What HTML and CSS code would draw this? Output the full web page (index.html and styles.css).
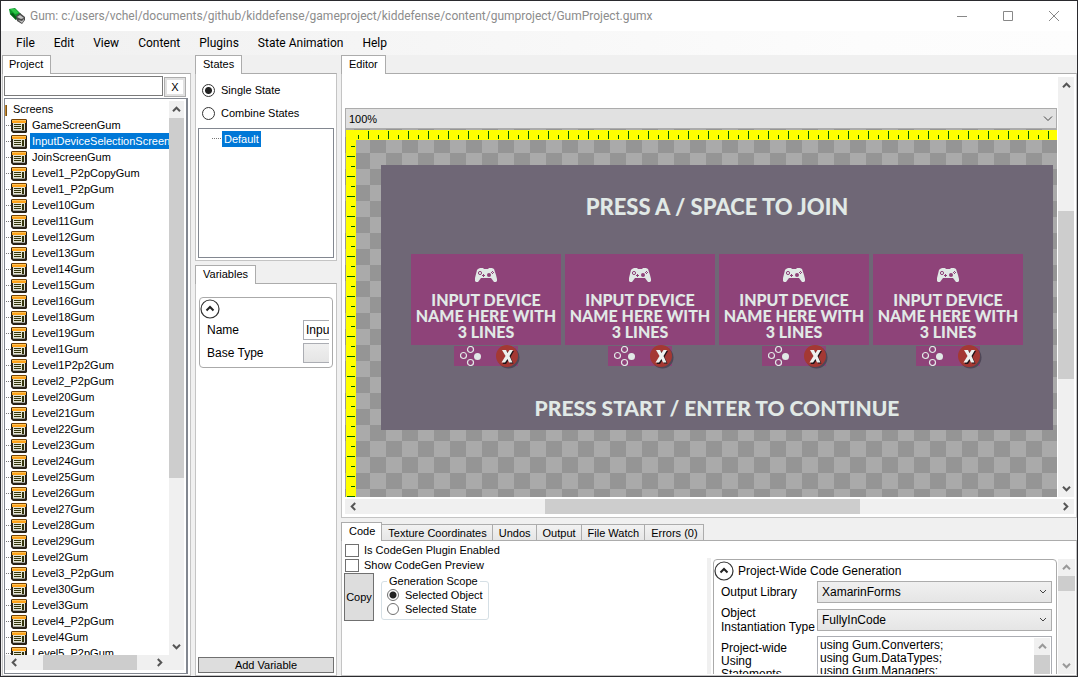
FILE: index.html
```html
<!DOCTYPE html>
<html lang="en">
<head>
<meta charset="utf-8">
<title>Gum</title>
<link rel="stylesheet" href="styles.css">
</head>
<body>
<svg class="sprites" aria-hidden="true">
  <symbol id="screen" viewBox="0 0 16 14">
    <path d="M1 0h14l1 1v12l-1 1H2l-2-2V1z" fill="#2a2318"/>
    <path d="M1 1h14v3H1z" fill="#ffa31a"/><path d="M1 1h14v1H1z" fill="#ffc45a"/><path d="M1 0h14v1H1z" fill="#7a4300"/>
    <path d="M2 4h12v8H2z" fill="#e4e4d4"/>
    <path d="M3 5h7v1H3zM3 7h7v1H3zM3 9h7v1H3zM11 5h2v6h-2z" fill="#33340a"/>
    <path d="M2 11h12v1H2z" fill="#a8a8a0"/>
  </symbol>
  <symbol id="up" viewBox="0 0 9 7"><path d="M1 5.2 4.5 1.7 8 5.2" fill="none" stroke="currentColor" stroke-width="2"/></symbol>
  <symbol id="down" viewBox="0 0 9 7"><path d="M1 1.8 4.5 5.3 8 1.8" fill="none" stroke="currentColor" stroke-width="2"/></symbol>
  <symbol id="left" viewBox="0 0 7 9"><path d="M5.2 1 1.7 4.5 5.2 8" fill="none" stroke="currentColor" stroke-width="2"/></symbol>
  <symbol id="right" viewBox="0 0 7 9"><path d="M1.8 1 5.3 4.5 1.8 8" fill="none" stroke="currentColor" stroke-width="2"/></symbol>
  <symbol id="expander" viewBox="0 0 20 20"><circle cx="10" cy="10" r="9" fill="#fff" stroke="#333" stroke-width="1.2"/><path d="M6.5 11.5 10 8l3.500 3.500" fill="none" stroke="#222" stroke-width="2"/></symbol>
  <symbol id="pad" viewBox="0 0 22 14">
    <path d="M5 0h3l1 1h4l1-1h3l2 1 1 3 1 3 1 4v2l-1 1h-2l-3-4H6l-3 4H1l-1-1v-3l1-4 1-4 1-1z" fill="#e1e9e6"/>
    <circle cx="5" cy="5" r="1.600" fill="none" stroke="#8e4379"/>
    <circle cx="14" cy="7" r="2" fill="#8e4379"/>
    <path d="M7 7.500h3M8.500 6v3M17.500 3v1M17.500 5v1M16 4.500h1M18 4.500h1" stroke="#8e4379"/>
  </symbol>
  <symbol id="buttons" viewBox="0 0 22 20">
    <g fill="none" stroke="#e1e9e6" stroke-width="1.2"><circle cx="10.500" cy="3.500" r="3"/><circle cx="3.500" cy="9.500" r="3"/><circle cx="10.500" cy="16.500" r="3"/></g>
    <circle cx="17.500" cy="10.500" r="3.500" fill="#e1e9e6"/>
  </symbol>
  <symbol id="cross" viewBox="0 0 24 24">
    <circle cx="12.500" cy="12.500" r="11" fill="#4f4757"/><circle cx="11" cy="11" r="11" fill="#a43833"/>
    <path d="M7 6h4l1.500 3L14.500 6H18l-3.500 6 3 6.500H14l-1.500-3.500-2.500 4H6.500l4-7z" fill="#201418"/>
    <path d="M6 5h4l1.500 3L13.500 5H17l-3.500 6 3 6.500H13L11.500 14 9 17.500H5.500L9.500 11z" fill="#eef2ef"/>
  </symbol>
</svg>

<div class="window">
  <header class="titlebar">
    <svg class="logo" viewBox="0 0 16 16"><path d="M0 1 6 0l6 6-5 6L1 6z" fill="#0b9a2a"/><path d="M1 1l5 0 4 4-4 1z" fill="#2fc548"/><path d="M1 6l3-1 4 5-1 2z" fill="#075f18"/><path d="M7 8l4-3 5 4v3l-3 4-5-3z" fill="#4b4b4b"/><path d="M8 9l3-2 4 3-3 1zM9 12l4 1 2-2v1l-2 3z" fill="#c4c4c4"/></svg>
    <h1>Gum: c:/users/vchel/documents/github/kiddefense/gameproject/kiddefense/content/gumproject/GumProject.gumx</h1>
    <div class="controls">
      <button aria-label="Minimize"><svg viewBox="0 0 10 10"><path d="M0 5.500h10"/></svg></button>
      <button aria-label="Maximize"><svg viewBox="0 0 10 10"><path d="M.5.5h9v9h-9z"/></svg></button>
      <button aria-label="Close"><svg viewBox="0 0 10 10"><path d="M0 0l10 10M10 0 0 10"/></svg></button>
    </div>
  </header>
  <nav class="menu">
    <button>File</button><button>Edit</button><button>View</button><button>Content</button><button>Plugins</button><button>State Animation</button><button>Help</button>
  </nav>

  <main class="workspace">
    <section class="dock project">
      <div class="tabs"><button class="tab active">Project</button></div>
      <div class="panel">
        <div class="search"><input type="text" aria-label="Search"><button>X</button></div>
        <div class="tree">
          <div class="tree-body">
            <ul>
              <li class="root">Screens</li>
              <li><svg><use href="#screen"/></svg><span>GameScreenGum</span></li>
              <li><svg><use href="#screen"/></svg><span class="selected">InputDeviceSelectionScreen</span></li>
              <li><svg><use href="#screen"/></svg><span>JoinScreenGum</span></li>
              <li><svg><use href="#screen"/></svg><span>Level1_P2pCopyGum</span></li>
              <li><svg><use href="#screen"/></svg><span>Level1_P2pGum</span></li>
              <li><svg><use href="#screen"/></svg><span>Level10Gum</span></li>
              <li><svg><use href="#screen"/></svg><span>Level11Gum</span></li>
              <li><svg><use href="#screen"/></svg><span>Level12Gum</span></li>
              <li><svg><use href="#screen"/></svg><span>Level13Gum</span></li>
              <li><svg><use href="#screen"/></svg><span>Level14Gum</span></li>
              <li><svg><use href="#screen"/></svg><span>Level15Gum</span></li>
              <li><svg><use href="#screen"/></svg><span>Level16Gum</span></li>
              <li><svg><use href="#screen"/></svg><span>Level18Gum</span></li>
              <li><svg><use href="#screen"/></svg><span>Level19Gum</span></li>
              <li><svg><use href="#screen"/></svg><span>Level1Gum</span></li>
              <li><svg><use href="#screen"/></svg><span>Level1P2p2Gum</span></li>
              <li><svg><use href="#screen"/></svg><span>Level2_P2pGum</span></li>
              <li><svg><use href="#screen"/></svg><span>Level20Gum</span></li>
              <li><svg><use href="#screen"/></svg><span>Level21Gum</span></li>
              <li><svg><use href="#screen"/></svg><span>Level22Gum</span></li>
              <li><svg><use href="#screen"/></svg><span>Level23Gum</span></li>
              <li><svg><use href="#screen"/></svg><span>Level24Gum</span></li>
              <li><svg><use href="#screen"/></svg><span>Level25Gum</span></li>
              <li><svg><use href="#screen"/></svg><span>Level26Gum</span></li>
              <li><svg><use href="#screen"/></svg><span>Level27Gum</span></li>
              <li><svg><use href="#screen"/></svg><span>Level28Gum</span></li>
              <li><svg><use href="#screen"/></svg><span>Level29Gum</span></li>
              <li><svg><use href="#screen"/></svg><span>Level2Gum</span></li>
              <li><svg><use href="#screen"/></svg><span>Level3_P2pGum</span></li>
              <li><svg><use href="#screen"/></svg><span>Level30Gum</span></li>
              <li><svg><use href="#screen"/></svg><span>Level3Gum</span></li>
              <li><svg><use href="#screen"/></svg><span>Level4_P2pGum</span></li>
              <li><svg><use href="#screen"/></svg><span>Level4Gum</span></li>
              <li><svg><use href="#screen"/></svg><span>Level5_P2pGum</span></li>
            </ul>
            <div class="vbar"><svg class="v"><use href="#up"/></svg><div class="track"><i class="thumb grow-360"></i><i class="grow-160"></i></div><svg class="v"><use href="#down"/></svg></div>
          </div>
          <div class="hbar"><svg class="h"><use href="#left"/></svg><div class="track"><i class="grow-20"></i><i class="thumb grow-93"></i><i class="grow-14"></i></div><svg class="h"><use href="#right"/></svg></div>
        </div>
      </div>
    </section>

    <div class="middle">
      <section class="dock states">
        <div class="tabs"><button class="tab active">States</button></div>
        <div class="panel">
          <label class="radio"><input type="radio" name="mode" checked>Single State</label>
          <label class="radio"><input type="radio" name="mode">Combine States</label>
          <div class="state-list"><span>Default</span></div>
        </div>
      </section>
      <section class="dock variables">
        <div class="tabs"><button class="tab active">Variables</button></div>
        <div class="panel">
          <div class="group">
            <button class="expander" aria-label="Collapse"><svg><use href="#expander"/></svg></button>
            <div class="row"><label for="name">Name</label><input id="name" type="text" value="InputDeviceSelectionScreen"></div>
            <div class="row"><label for="base">Base Type</label><select id="base"><option></option></select></div>
          </div>
          <button class="push">Add Variable</button>
        </div>
      </section>
    </div>

    <div class="right">
      <section class="dock editor">
        <div class="tabs"><button class="tab active">Editor</button></div>
        <div class="panel">
          <div class="editor-body">
            <div class="view">
              <div class="combo zoom"><select aria-label="Zoom"><option>100%</option></select><svg viewBox="0 0 10 6"><path d="M1 .5 5 4.500 9 .5"/></svg></div>
              <div class="canvas">
                <div class="ruler-x"></div>
                <div class="ruler-y"></div>
                <div class="stage">
                  <p class="headline">PRESS A / SPACE TO JOIN</p>
                  <div class="cards">
                    <div class="player"><div class="card"><svg><use href="#pad"/></svg><p>INPUT DEVICE<br>NAME HERE WITH<br>3 LINES</p></div><div class="strip"><svg class="dots"><use href="#buttons"/></svg><svg class="cross"><use href="#cross"/></svg></div></div>
                    <div class="player"><div class="card"><svg><use href="#pad"/></svg><p>INPUT DEVICE<br>NAME HERE WITH<br>3 LINES</p></div><div class="strip"><svg class="dots"><use href="#buttons"/></svg><svg class="cross"><use href="#cross"/></svg></div></div>
                    <div class="player"><div class="card"><svg><use href="#pad"/></svg><p>INPUT DEVICE<br>NAME HERE WITH<br>3 LINES</p></div><div class="strip"><svg class="dots"><use href="#buttons"/></svg><svg class="cross"><use href="#cross"/></svg></div></div>
                    <div class="player"><div class="card"><svg><use href="#pad"/></svg><p>INPUT DEVICE<br>NAME HERE WITH<br>3 LINES</p></div><div class="strip"><svg class="dots"><use href="#buttons"/></svg><svg class="cross"><use href="#cross"/></svg></div></div>
                  </div>
                  <p class="headline prompt">PRESS START / ENTER TO CONTINUE</p>
                </div>
              </div>
            </div>
            <div class="vbar"><svg class="v"><use href="#up"/></svg><div class="track"><i class="grow-117"></i><i class="thumb grow-168"></i><i class="grow-101"></i></div><svg class="v"><use href="#down"/></svg></div>
          </div>
          <div class="hbar"><svg class="h"><use href="#left"/></svg><div class="track"><i class="grow-183"></i><i class="thumb grow-316"></i><i class="grow-197"></i></div><svg class="h"><use href="#right"/></svg></div>
        </div>
      </section>

      <section class="dock code">
        <div class="tabs">
          <button class="tab active">Code</button><button class="tab">Texture Coordinates</button><button class="tab">Undos</button><button class="tab">Output</button><button class="tab">File Watch</button><button class="tab">Errors (0)</button>
        </div>
        <div class="panel">
          <div class="code-left">
            <label class="check"><input type="checkbox">Is CodeGen Plugin Enabled</label>
            <label class="check"><input type="checkbox">Show CodeGen Preview</label>
            <div class="actions">
              <button class="copy">Copy</button>
              <fieldset>
                <legend>Generation Scope</legend>
                <label class="radio"><input type="radio" name="scope" checked>Selected Object</label>
                <label class="radio"><input type="radio" name="scope">Selected State</label>
              </fieldset>
            </div>
          </div>
          <div class="splitter"></div>
          <div class="settings">
            <div class="group">
              <div class="group-head"><button class="expander" aria-label="Collapse"><svg><use href="#expander"/></svg></button>Project-Wide Code Generation</div>
              <label for="lib">Output Library</label>
              <div class="combo"><select id="lib"><option>XamarinForms</option></select><svg viewBox="0 0 10 6"><path d="M2 1 5 4l3-3"/></svg></div>
              <label for="inst">Object Instantiation Type</label>
              <div class="combo"><select id="inst"><option>FullyInCode</option></select><svg viewBox="0 0 10 6"><path d="M2 1 5 4l3-3"/></svg></div>
              <label for="using" class="using">Project-wide Using Statements</label>
              <div class="memo"><textarea id="using">using Gum.Converters;
using Gum.DataTypes;
using Gum.Managers;
using Gum.Wireframe;</textarea><div class="vbar thin"><svg class="v"><use href="#up"/></svg><div class="track"><i class="thumb grow-16"></i><i class="grow-14"></i></div></div></div>
            </div>
            <div class="vbar thin"><svg class="v"><use href="#up"/></svg><div class="track"><i class="thumb grow-15"></i><i class="grow-67"></i></div><svg class="v"><use href="#down"/></svg></div>
          </div>
        </div>
      </section>
    </div>
  </main>
</div>
</body>
</html>
```
FILE: styles.css
```css
* { box-sizing: border-box; }
html, body { height: 100%; margin: 0; }
body, button, input, select, textarea { font: 11px/14px "Liberation Sans", Arial, sans-serif; color: #000; }
button { padding: 0; border: 0; background: none; }
p, ul, h1 { margin: 0; padding: 0; }
svg { display: block; flex: none; }
.sprites { display: none; }

.window { display: flex; flex-direction: column; height: 100vh; border: 1px solid #2a2a2e; background: #f0f0f0; overflow: hidden; }

.titlebar { display: flex; align-items: center; height: 30px; padding-left: 8px; background: #fff; }
.logo { width: 16px; height: 16px; }
.titlebar h1 { flex: 1; margin-left: 5px; font: 12px/16px Roboto, sans-serif; color: #8c8c8c; white-space: nowrap; }
.controls { display: flex; }
.controls button { display: grid; place-items: center; width: 46px; height: 30px; }
.controls svg { width: 10px; height: 10px; fill: none; stroke: #888; }

.menu { display: flex; align-items: center; height: 24px; padding-left: 6px; background: linear-gradient(90deg, #f0f0f0, #fcfcfc 80%, #fdfdfd); }
.menu button { padding: 0 10px 0 9px; font: 12px/16px Roboto, sans-serif; white-space: nowrap; }

.workspace { flex: 1; display: flex; gap: 4px; min-height: 0; }
.dock { display: flex; flex-direction: column; min-height: 0; }
.tabs { display: flex; align-items: flex-end; }
.tab { height: 18px; padding: 0 6px; border: 1px solid #acacac; border-bottom: 0; border-left-width: 0; background: linear-gradient(#f2f2f2, #e6e6e6); white-space: nowrap; }
.tab.active { position: relative; height: 19px; margin-bottom: -1px; padding: 0 7px 2px; border-left-width: 1px; background: #fff; }
.panel { flex: 1; display: flex; flex-direction: column; min-height: 0; border: 1px solid #c4c4c4; border-top-color: #acacac; background: #fff; }

.project { width: 190px; padding-left: 1px; }
.project .panel { padding: 2px 2px 1px 1px; }
.project .tab.active { padding: 0 7px 2px 6px; }
.search { display: flex; gap: 1px; height: 22px; padding-right: 2px; }
.search input { flex: 1; min-width: 0; height: 20px; border: 1px solid #7a7a7a; }
.search button { width: 22px; height: 20px; margin-top: 1px; border: 3px solid #e1e1e1; outline: 1px solid #adadad; outline-offset: -1px; background: #fff; }
.tree { flex: 1; display: flex; flex-direction: column; min-height: 0; border: 1px solid #828790; border-right-width: 2px; padding: 2px 2px 3px 0; }
.tree-body { flex: 1; display: flex; min-height: 0; }
.tree ul { flex: 1; min-width: 0; overflow: hidden; list-style: none; }
.tree li { display: flex; align-items: center; height: 16px; white-space: nowrap; }
.tree li::before { content: ""; flex: none; width: 5px; margin-left: 1px; border-top: 1px dotted #777; }
.tree li svg { width: 16px; height: 14px; margin-top: 2px; }
.tree li span { flex: none; margin-left: 3px; padding: 0 2px; line-height: 16px; }
.tree li .selected { background: #0078d7; color: #fff; }
.tree li.root::before { width: 2px; height: 11px; margin: 3px 6px 0 0; border: 0; background: linear-gradient(90deg, #e8a33a, #5b3a08); }

.vbar { display: flex; flex-direction: column; align-items: center; width: 15px; background: #f0f0f0; color: #555; }
.hbar { display: flex; align-items: center; height: 15px; background: #f0f0f0; color: #555; }
.v { width: 9px; height: 7px; margin: 5px 0; }
.h { width: 7px; height: 9px; margin: 0 5px; }
.track { flex: 1; display: flex; align-self: stretch; min-height: 0; }
.vbar .track { flex-direction: column; }
.thumb { background: #cdcdcd; }
.thin { color: #999; }
.grow-14 { flex: 14; } .grow-15 { flex: 15; } .grow-16 { flex: 16; } .grow-20 { flex: 20; } .grow-67 { flex: 67; }
.grow-93 { flex: 93; } .grow-101 { flex: 101; } .grow-117 { flex: 117; } .grow-160 { flex: 160; } .grow-168 { flex: 168; }
.grow-183 { flex: 183; } .grow-197 { flex: 197; } .grow-316 { flex: 316; } .grow-360 { flex: 360; }
.tree .hbar { padding: 0 16px 0 1px; }

.middle { display: flex; flex-direction: column; gap: 4px; width: 142px; }
.states .panel { padding: 6px 2px 2px; }
.radio { display: flex; align-items: center; gap: 6px; height: 20px; white-space: nowrap; }
.radio input { appearance: none; flex: none; width: 13px; height: 13px; margin: 0; border: 1px solid #333; border-radius: 50%; background: #fff; }
.radio input:checked { background: radial-gradient(#222 0 3px, #fff 4px); }
.states .radio { margin: 0 0 3px 4px; }
.state-list { display: flex; align-items: flex-start; height: 130px; margin-top: 2px; padding: 2px 13px; border: 1px solid #828790; }
.state-list::before { content: ""; width: 9px; margin-top: 7px; border-top: 1px dotted #777; }
.state-list span { margin-left: 1px; padding: 0 2px; background: #0078d7; color: #fff; line-height: 16px; }
.variables { flex: 1; }
.variables .panel { justify-content: space-between; padding: 13px 2px 2px; }
.group { border: 1px solid #aaa; border-radius: 4px; font-size: 12px; }
.expander { display: block; width: 20px; height: 20px; }
.expander svg { width: 20px; height: 20px; }
.variables .group { margin: 0 1px; padding: 1px 3px 1px 0; }
.variables .expander { margin-bottom: 1px; }
.row { display: flex; align-items: center; height: 20px; margin-bottom: 3px; padding-left: 7px; line-height: 20px; }
.row label { flex: 1; }
.row input, .row select { width: 26px; height: 20px; padding: 0 0 0 2px; border: 1px solid #abadb3; border-right: 0; border-radius: 0; font-size: 12px; }
.row select { appearance: none; background: linear-gradient(#f0f0f0, #e5e5e5); }
.push { height: 16px; border: 1px solid #707070; background: #ddd; }

.right { flex: 1; display: flex; flex-direction: column; gap: 4px; min-width: 0; }
.editor { flex: 1; }
.editor .panel { padding: 3px 2px 3px 3px; }
.editor-body { flex: 1; display: flex; gap: 1px; min-height: 0; }
.view { flex: 1; display: flex; flex-direction: column; min-width: 0; padding-top: 31px; }
.editor .hbar { margin-top: 2px; }
.editor .vbar { width: 16px; }
.combo { display: grid; align-items: center; }
.combo select, .combo svg { grid-area: 1 / 1; }
.combo select { appearance: none; width: 100%; height: 22px; padding: 0 4px; border: 1px solid #acacac; border-radius: 0; background: linear-gradient(#f0f0f0, #e5e5e5); font-size: 12px; }
.combo svg { justify-self: end; width: 10px; height: 6px; margin-right: 4px; fill: none; stroke: #444; pointer-events: none; }
.zoom select { height: 21px; padding: 0 3px; background: #e1e1e1; font-size: 11px; }

.canvas { flex: 1; display: grid; grid-template: 10px 1fr / 10px 1fr; min-height: 0; padding: 1px 0 0 1px; background: repeating-conic-gradient(#959595 0 25%, #aaa 0 50%) 9px 8px / 32px 32px; overflow: hidden; }
.ruler-x { grid-area: 1 / 1 / 2 / 3; background:
  repeating-linear-gradient(90deg, #006400 0 1px, transparent 1px 20px) 22px 1px / 100% 8px no-repeat,
  repeating-linear-gradient(90deg, #006400 0 1px, transparent 1px 20px) 12px 5px / 100% 4px no-repeat, #ff0; }
.ruler-y { grid-area: 2 / 1; background:
  repeating-linear-gradient(#006400 0 1px, transparent 1px 20px) 1px 16px / 8px 100% no-repeat,
  repeating-linear-gradient(#006400 0 1px, transparent 1px 20px) 5px 6px / 4px 100% no-repeat, #ff0; }
.stage { grid-area: 2 / 2; align-self: start; display: flex; flex-direction: column; align-items: center; margin: 25px 4px 0 25px; padding: 29px 0 9px; background: #6f6776; }
.headline, .card p { font-family: "Lato", sans-serif; font-weight: 900; color: #e1e9e6; text-align: center; white-space: nowrap; }
.headline { font-size: 22px; line-height: 26px; }
.prompt { margin-top: 29px; font-size: 21px; }
.cards { display: flex; gap: 4px; margin-top: 34px; }
.player { display: flex; flex-direction: column; align-items: center; gap: 1px; }
.card { display: flex; flex-direction: column; align-items: center; gap: 10px; width: 150px; height: 91px; padding-top: 14px; background: #8e4379; }
.card svg { width: 22px; height: 14px; }
.card p { font-size: 16px; line-height: 16px; }
.strip { display: flex; justify-content: space-between; width: 64px; height: 20px; padding-left: 6px; background: #8e4379; }
.dots { width: 22px; height: 20px; }
.cross { width: 24px; height: 24px; margin: -1px -2px 0 0; }

.code { height: 154px; }
.code .tab { height: 16px; padding: 0 5px 0 6px; }
.code .tab.active { height: 19px; padding: 0 6px 2px 7px; }
.code .panel { flex-direction: row; padding: 3px 1px 1px 2px; }
.code-left { flex: 1; min-width: 0; }
.check { display: flex; align-items: flex-start; gap: 5px; height: 14px; line-height: 12px; }
.check + .check { margin-top: 1px; }
.check input { appearance: none; flex: none; width: 14px; height: 13px; margin: 0 0 0 1px; border: 1px solid #707070; background: #fff; }
.actions { display: flex; gap: 7px; }
.copy { width: 30px; height: 48px; border: 1px solid #707070; background: #ddd; }
fieldset { width: 107px; height: 46px; margin: 1px 0 0; padding: 0 5px; border: 1px solid #d5dfe5; border-radius: 3px; }
legend { padding: 0 2px; line-height: 14px; }
fieldset .radio { height: 14px; }
fieldset .radio input { width: 12px; height: 12px; border-color: #707070; }
.splitter { width: 4px; margin: 14px 2px 0 0; background: #f0f0f0; }
.settings { display: flex; gap: 1px; width: 362px; margin-top: 15px; overflow: hidden; }
.settings > .vbar { width: 17px; }
.settings .group { flex: 1; display: grid; grid-template: 20px 22px 33px 60px / 96px 1fr; align-items: center; margin-bottom: -40px; padding: 1px 4px 0 7px; line-height: 14px; }
.group-head { grid-column: 1 / 3; display: flex; align-items: center; gap: 4px; margin-left: -7px; line-height: 20px; }
.using { align-self: start; width: 80px; margin-top: 6px; line-height: 13px; }
.memo { align-self: start; display: flex; height: 60px; padding: 1px; border: 1px solid #abadb3; }
.memo textarea { flex: 1; height: 58px; padding: 1px 1px 0; border: 0; resize: none; overflow: hidden; font-size: 12px; line-height: 13px; }
.memo .vbar { width: 16px; }
```
